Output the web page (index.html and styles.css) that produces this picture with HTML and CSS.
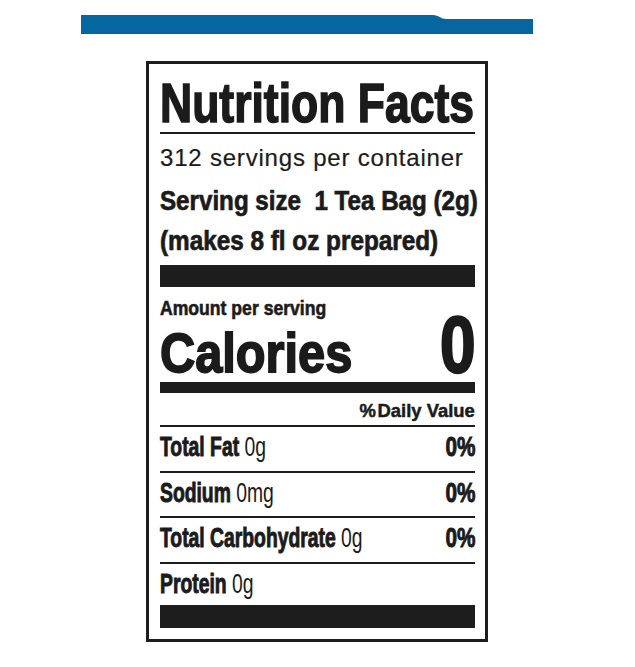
FILE: index.html
```html
<!DOCTYPE html>
<html lang="en">
<head>
<meta charset="utf-8">
<title>Nutrition Facts</title>
<link rel="stylesheet" href="styles.css">
</head>
<body>
<div class="page">
  <div class="topbar">
    <svg width="452" height="19" viewBox="0 0 452 19" aria-hidden="true">
      <path d="M0 0H352C358 0 359 4 366 4H452V19H0Z" fill="#0666a0"/>
    </svg>
  </div>
  <div class="label">
    <div class="title"><span class="sx sx-title">Nutrition Facts</span></div>
    <div class="rule rule-title"></div>
    <div class="servings">312 servings per container</div>
    <div class="size"><span class="sx sx-size">Serving size&nbsp; 1 Tea Bag (2g)</span></div>
    <div class="makes"><span class="sx sx-makes">(makes 8 fl oz prepared)</span></div>
    <div class="bar bar-thick"></div>
    <div class="amount"><span class="sx sx-amount">Amount per serving</span></div>
    <div class="calories">
      <span class="cal-label"><span class="sx sx-cal">Calories</span></span>
      <span class="cal-value"><span class="sx sx-r sx-zero">0</span></span>
    </div>
    <div class="bar bar-mid"></div>
    <div class="dv-head"><span class="sx sx-r sx-dv">%&#8202;Daily Value</span></div>
    <div class="rule rule-dv"></div>
    <div class="row">
      <span class="lbl"><span class="sx sx-row"><b>Total Fat</b> 0g</span></span>
      <span class="pct"><span class="sx sx-r sx-pct">0%</span></span>
    </div>
    <div class="row">
      <span class="lbl"><span class="sx sx-row"><b>Sodium</b> 0mg</span></span>
      <span class="pct"><span class="sx sx-r sx-pct">0%</span></span>
    </div>
    <div class="row">
      <span class="lbl"><span class="sx sx-row"><b>Total Carbohydrate</b> 0g</span></span>
      <span class="pct"><span class="sx sx-r sx-pct">0%</span></span>
    </div>
    <div class="row row-last">
      <span class="lbl"><span class="sx sx-row"><b>Protein</b> 0g</span></span>
    </div>
    <div class="bar bar-bottom"></div>
  </div>
</div>
</body>
</html>
```
FILE: styles.css
```css
html, body {
  margin: 0;
  background: #ffffff;
}

body {
  font-family: "Liberation Sans", Arial, sans-serif;
  color: #1b1b1b;
}

.page {
  padding-top: 15px;
}

.topbar {
  margin-left: 81px;
  height: 19px;
}

.topbar svg {
  display: block;
}

.label {
  margin: 27px 0 0 146px;
  width: 342px;
  box-sizing: border-box;
  border: 3px solid #1d1d1d;
  padding: 11px 10px 11px 11px;
}

.sx {
  display: inline-block;
  white-space: nowrap;
  transform-origin: 0 50%;
}

.sx-r {
  transform-origin: 100% 50%;
}

b {
  font-weight: 700;
  -webkit-text-stroke: 1px #1b1b1b;
}

.title {
  font-size: 56px;
  line-height: 56px;
  font-weight: 700;
  white-space: nowrap;
  -webkit-text-stroke: 1.6px #1b1b1b;
}

.sx-title {
  transform: scaleX(0.795);
}

.rule {
  height: 2px;
  background: #1d1d1d;
}

.rule-title {
  margin-top: 1px;
}

.servings {
  margin-top: 10px;
  font-size: 24px;
  line-height: 28px;
  letter-spacing: 0.8px;
  white-space: nowrap;
  -webkit-text-stroke: 0.2px #1b1b1b;
}

.size {
  margin-top: 10px;
  font-size: 27px;
  line-height: 38px;
  font-weight: 700;
  white-space: nowrap;
  -webkit-text-stroke: 0.7px #1b1b1b;
}

.sx-size {
  transform: scaleX(0.895);
}

.makes {
  margin-top: 2px;
  font-size: 27px;
  line-height: 38px;
  font-weight: 700;
  white-space: nowrap;
  -webkit-text-stroke: 0.7px #1b1b1b;
}

.sx-makes {
  transform: scaleX(0.9);
}

.bar {
  background: #1d1d1d;
}

.bar-thick {
  margin-top: 5px;
  height: 22px;
}

.amount {
  margin-top: 9px;
  font-size: 20px;
  line-height: 24px;
  font-weight: 700;
  white-space: nowrap;
  -webkit-text-stroke: 0.6px #1b1b1b;
}

.sx-amount {
  transform: scaleX(0.88);
}

.calories {
  display: flex;
  align-items: baseline;
  font-weight: 700;
}

.cal-label {
  flex: 1;
  min-width: 0;
  font-size: 56px;
  line-height: 50px;
  white-space: nowrap;
  -webkit-text-stroke: 1.8px #1b1b1b;
}

.sx-cal {
  transform: scaleX(0.87);
}

.cal-value {
  flex: none;
  font-size: 80px;
  line-height: 50px;
  -webkit-text-stroke: 2.4px #1b1b1b;
}

.sx-zero {
  transform: scaleX(0.8);
}

.bar-mid {
  margin-top: 4px;
  height: 11px;
}

.dv-head {
  margin-top: 7px;
  font-size: 19px;
  line-height: 22px;
  font-weight: 700;
  text-align: right;
  white-space: nowrap;
  -webkit-text-stroke: 0.5px #1b1b1b;
}

.sx-dv {
  transform: scaleX(0.97);
}

.rule-dv {
  margin-top: 3px;
}

.row {
  display: flex;
  align-items: baseline;
  font-size: 28px;
  line-height: 40px;
  padding-bottom: 3.5px;
  border-bottom: 2px solid #1d1d1d;
}

.row-last {
  padding-bottom: 0;
  border-bottom: none;
}

.lbl {
  flex: 1;
  min-width: 0;
  white-space: nowrap;
}

.sx-row {
  transform: scaleX(0.69);
}

.pct {
  flex: none;
  font-weight: 700;
  -webkit-text-stroke: 1px #1b1b1b;
}

.sx-pct {
  transform: scaleX(0.74);
}

.bar-bottom {
  margin-top: 1px;
  height: 23px;
}
```
